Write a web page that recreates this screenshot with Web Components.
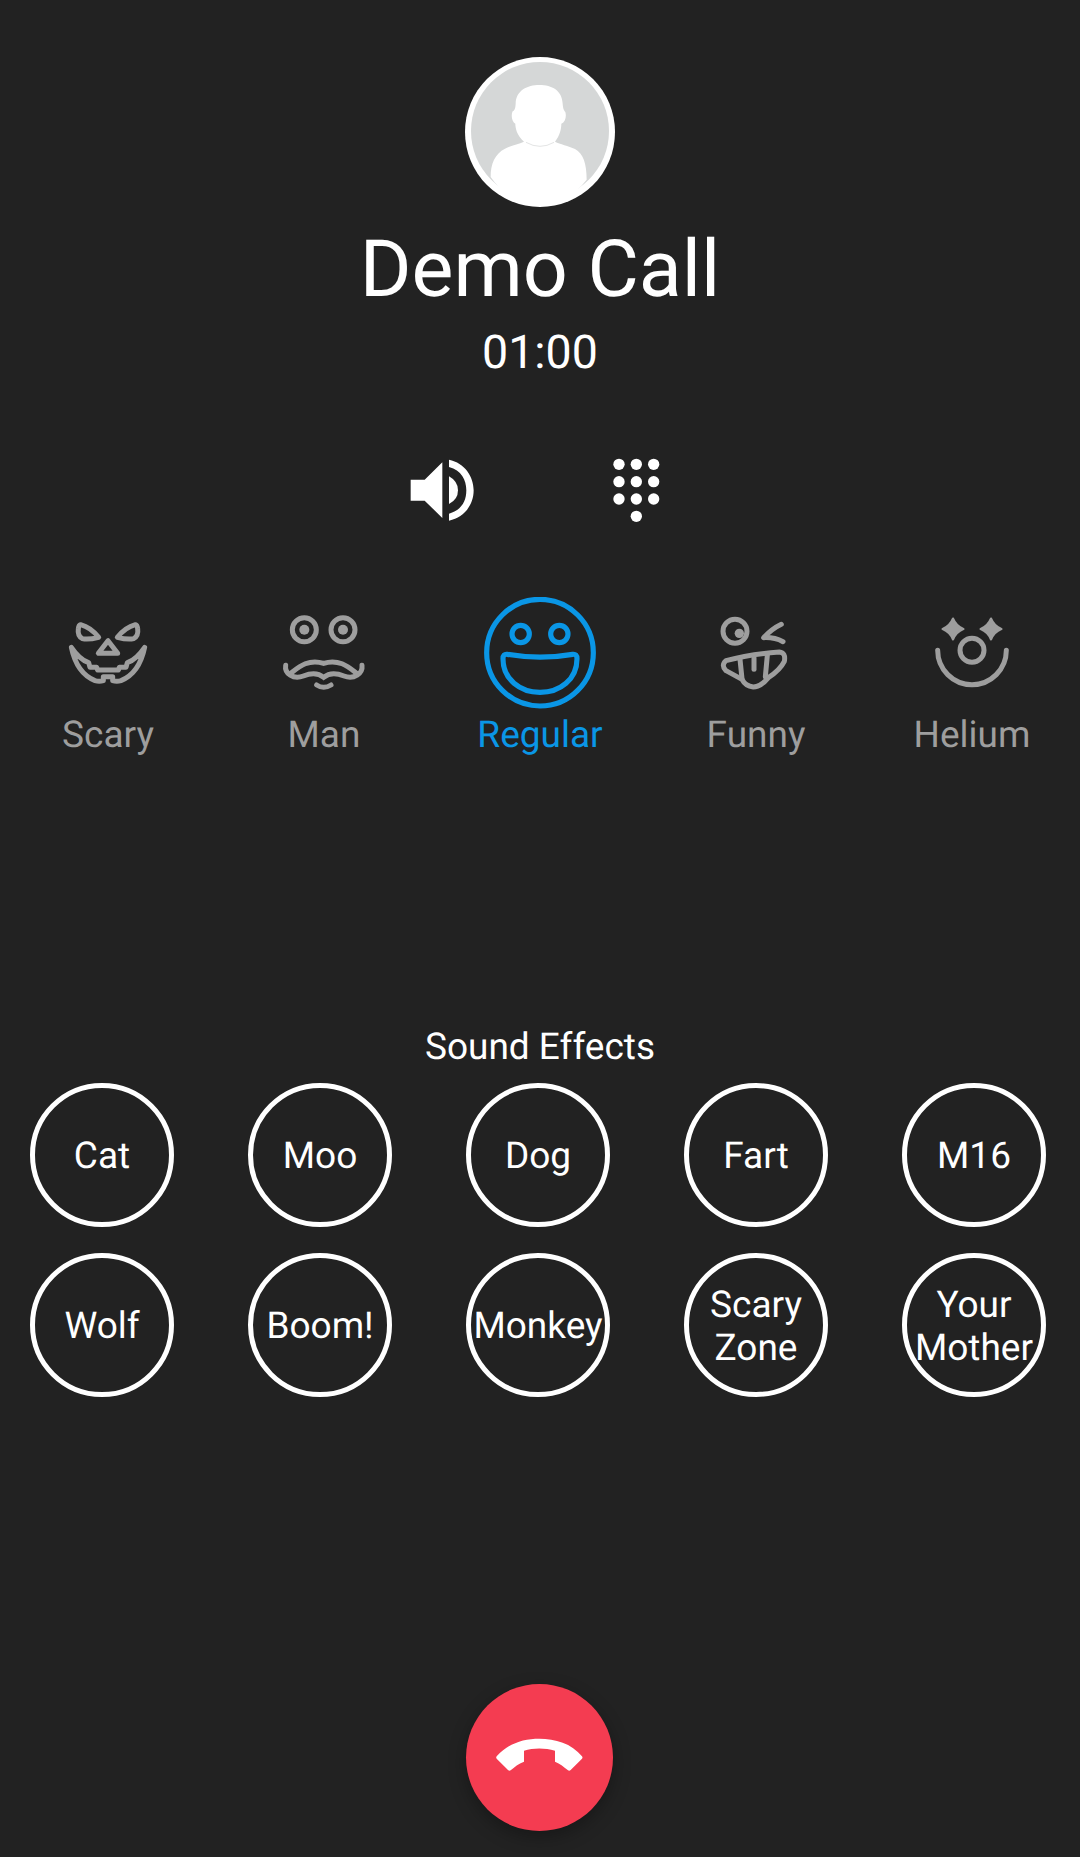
<!DOCTYPE html>
<html>
<head>
<meta charset="utf-8">
<title>Demo Call</title>
<style>
    html, body {
        margin: 0;
        background: #222222;
    }
</style>
</head>
<body>
<call-screen>
    <call-header slot="header" name="Demo Call" time="01:00"></call-header>

    <icon-button slot="actions">
        <svg viewBox="58 52 200 200" width="66.67" height="66.67" fill="currentColor">
            <path d="M63 120H105L158 68V235L105 183H63Z"/>
            <path d="M178 110Q205 125 205 152Q205 180 178 193Z"/>
            <path d="M178 60C225 70 252 110 252 152C252 195 225 233 178 243V222C215 212 230 185 230 152C230 120 215 92 178 82Z"/>
        </svg>
    </icon-button>
    <icon-button slot="actions">
        <svg viewBox="639 51 200 200" width="66.67" height="66.67" fill="currentColor">
            <circle cx="687" cy="73" r="17"/><circle cx="739" cy="73" r="17"/><circle cx="791" cy="73" r="17"/>
            <circle cx="687" cy="125" r="17"/><circle cx="739" cy="125" r="17"/><circle cx="791" cy="125" r="17"/>
            <circle cx="687" cy="177" r="17"/><circle cx="739" cy="177" r="17"/><circle cx="791" cy="177" r="17"/>
            <circle cx="739" cy="229" r="17"/>
        </svg>
    </icon-button>

    <voice-mode slot="modes" label="Scary">
        <svg viewBox="36 21 336 336" fill="none" stroke="currentColor" stroke-width="15" stroke-linejoin="round" stroke-linecap="round">
            <path d="M122 104Q152 112 176 142Q145 150 127 146Q112 138 115 116Q116 106 122 104Z"/>
            <path d="M286 104Q256 112 232 142Q263 150 281 146Q296 138 293 116Q292 106 286 104Z"/>
            <path d="M204 152L175 190H233Z"/>
            <path d="M94 172C105 225 130 258 165 272Q178 276 190 272V260H218V272Q230 276 243 272C278 258 303 225 314 172C295 200 280 212 262 218L258 232H238L235 240H173L170 232H150L146 218C128 212 113 200 94 172Z"/>
        </svg>
    </voice-mode>
    <voice-mode slot="modes" label="Man">
        <svg viewBox="684 21 336 336" fill="none" stroke="currentColor" stroke-width="15" stroke-linecap="round">
            <circle cx="793" cy="119" r="36"/>
            <circle cx="909" cy="119" r="36"/>
            <circle cx="793" cy="119" r="15" fill="currentColor" stroke="none"/>
            <circle cx="909" cy="119" r="15" fill="currentColor" stroke="none"/>
            <path d="M737 226C733 250 760 270 790 258C812 249 832 246 851 262C870 246 890 249 912 258C942 270 969 250 966 226"/>
            <path d="M752 250C775 232 805 205 851 220C897 205 927 232 950 250"/>
            <path d="M830 285Q851 299 873 285"/>
        </svg>
    </voice-mode>
    <voice-mode slot="modes" label="Regular" active>
        <svg viewBox="72 21 336 336" fill="none" stroke="currentColor" stroke-width="15.5">
            <circle cx="240" cy="188" r="160"/>
            <circle cx="182" cy="132" r="26"/>
            <circle cx="298" cy="132" r="26"/>
            <path d="M142 193Q240 210 338 193Q351 191 351 206C351 268 300 307 240 307C180 307 129 268 129 206Q129 191 142 193Z"/>
        </svg>
    </voice-mode>
    <voice-mode slot="modes" label="Funny">
        <svg viewBox="30 21 336 336" fill="none" stroke="currentColor" stroke-width="15" stroke-linecap="round" stroke-linejoin="round">
            <circle cx="135" cy="124" r="36"/>
            <circle cx="148" cy="130" r="14" fill="currentColor" stroke="none"/>
            <path d="M274 103C255 112 235 128 221 143C242 142 262 146 279 155"/>
            <path d="M108 212Q180 192 268 186Q288 188 283 214Q270 240 236 262Q212 291 190 291Q166 288 156 268L108 242Q92 226 108 212Z"/>
            <path d="M150 208L156 266"/>
            <path d="M232 196L226 260"/>
            <path d="M192 204V238"/>
        </svg>
    </voice-mode>
    <voice-mode slot="modes" label="Helium">
        <svg viewBox="678 21 336 336" fill="none" stroke="currentColor" stroke-width="15" stroke-linecap="round">
            <path fill="currentColor" stroke-width="7" stroke-linejoin="round" d="M789 86Q798 108 820 117Q798 126 789 148Q780 126 758 117Q780 108 789 86Z"/>
            <path fill="currentColor" stroke-width="7" stroke-linejoin="round" d="M903 86Q912 108 934 117Q912 126 903 148Q894 126 872 117Q894 108 903 86Z"/>
            <circle cx="846" cy="181" r="36"/>
            <path d="M743 181A103 103 0 0 0 949 181"/>
        </svg>
    </voice-mode>

    <effect-button slot="effects">Cat</effect-button>
    <effect-button slot="effects">Moo</effect-button>
    <effect-button slot="effects">Dog</effect-button>
    <effect-button slot="effects">Fart</effect-button>
    <effect-button slot="effects">M16</effect-button>
    <effect-button slot="effects">Wolf</effect-button>
    <effect-button slot="effects">Boom!</effect-button>
    <effect-button slot="effects">Monkey</effect-button>
    <effect-button slot="effects">Scary Zone</effect-button>
    <effect-button slot="effects">Your Mother</effect-button>

    <hangup-button slot="hangup"></hangup-button>
</call-screen>

<script>
const screenTemplate = document.createElement("template");
screenTemplate.innerHTML = `
    <style>
        :host {
            display: flex;
            flex-direction: column;
            box-sizing: border-box;
            height: 1857px;
            padding-top: 57px;
            background: #222222;
            color: #ffffff;
            font-family: Roboto, "Liberation Sans", sans-serif;
            text-rendering: geometricPrecision;
            overflow: hidden;
        }

        #actions {
            display: flex;
            justify-content: center;
            gap: 127px;
            margin-top: 76px;
            padding-right: 1px;
        }

        #modes {
            display: grid;
            grid-template-columns: repeat(5, 216px);
            margin-top: 73px;
        }

        #effectsTitle {
            margin-top: 270px;
            font-size: 37px;
            line-height: 42px;
            text-align: center;
        }

        #effects {
            display: grid;
            grid-template-columns: repeat(5, 144px);
            column-gap: 74px;
            row-gap: 26px;
            padding-left: 30px;
            margin-top: 14px;
        }

        #hangup {
            display: flex;
            justify-content: center;
            margin-top: auto;
            padding-bottom: 26px;
            padding-right: 1px;
        }
    </style>
    <slot name="header"></slot>
    <div id="actions"><slot name="actions"></slot></div>
    <div id="modes"><slot name="modes"></slot></div>
    <div id="effectsTitle">Sound Effects</div>
    <div id="effects"><slot name="effects"></slot></div>
    <div id="hangup"><slot name="hangup"></slot></div>
`;

class CallScreen extends HTMLElement {
    constructor() {
        super();
        this.attachShadow({mode: "open"}).appendChild(screenTemplate.content.cloneNode(true));
    }
}

const headerTemplate = document.createElement("template");
headerTemplate.innerHTML = `
    <style>
        :host {
            display: flex;
            flex-direction: column;
            align-items: center;
        }

        svg {
            display: block;
            width: 150px;
            height: 150px;
        }

        #name {
            margin-top: 17px;
            font-size: 79px;
            line-height: 92px;
        }

        #time {
            margin-top: 10px;
            font-size: 46.5px;
            line-height: 55px;
        }
    </style>
    <svg viewBox="75 50 450 450">
        <circle cx="300" cy="275" r="225" fill="#ffffff"/>
        <circle cx="300" cy="272" r="207" fill="#d5d7d7"/>
        <path fill="#ffffff" d="M152 410C152 370 165 340 195 325C215 315 235 312 252 304C230 285 226 262 226 250C216 245 212 225 218 213C224 210 226 205 227 190C228 150 262 134 298 134C336 134 366 150 368 190C369 205 372 210 376 215C380 228 376 245 364 250C364 265 360 285 345 304C360 312 385 316 405 326C430 340 440 370 440 418C400 470 350 490 300 490C240 490 190 465 152 410Z"/>
        <path fill="none" stroke="#e4e5e5" stroke-width="3" d="M258 306Q300 330 342 306"/>
    </svg>
    <div id="name"></div>
    <div id="time"></div>
`;

class CallHeader extends HTMLElement {
    constructor() {
        super();
        const root = this.attachShadow({mode: "open"});
        root.appendChild(headerTemplate.content.cloneNode(true));
        root.getElementById("name").textContent = this.getAttribute("name");
        root.getElementById("time").textContent = this.getAttribute("time");
    }
}

const iconButtonTemplate = document.createElement("template");
iconButtonTemplate.innerHTML = `
    <style>
        :host {
            display: flex;
            width: 67px;
            height: 67px;
            color: #ffffff;
        }
    </style>
    <slot></slot>
`;

class IconButton extends HTMLElement {
    constructor() {
        super();
        this.attachShadow({mode: "open"}).appendChild(iconButtonTemplate.content.cloneNode(true));
    }
}

const voiceModeTemplate = document.createElement("template");
voiceModeTemplate.innerHTML = `
    <style>
        :host {
            display: flex;
            flex-direction: column;
            align-items: center;
            color: #9e9e9e;
        }

        :host([active]) {
            color: #0a96e6;
        }

        ::slotted(svg) {
            display: block;
            width: 112px;
            height: 112px;
        }

        #label {
            margin-top: 6px;
            font-size: 37px;
            line-height: 42px;
        }
    </style>
    <slot></slot>
    <div id="label"></div>
`;

class VoiceMode extends HTMLElement {
    constructor() {
        super();
        const root = this.attachShadow({mode: "open"});
        root.appendChild(voiceModeTemplate.content.cloneNode(true));
        root.getElementById("label").textContent = this.getAttribute("label");
    }
}

const effectButtonTemplate = document.createElement("template");
effectButtonTemplate.innerHTML = `
    <style>
        :host {
            display: flex;
            align-items: center;
            justify-content: center;
            box-sizing: border-box;
            width: 144px;
            height: 144px;
            padding-top: 3px;
            border: 5px solid #ffffff;
            border-radius: 50%;
            font-size: 37px;
            line-height: 43px;
            text-align: center;
            color: #ffffff;
        }
    </style>
    <slot></slot>
`;

class EffectButton extends HTMLElement {
    constructor() {
        super();
        this.attachShadow({mode: "open"}).appendChild(effectButtonTemplate.content.cloneNode(true));
    }
}

const hangupTemplate = document.createElement("template");
hangupTemplate.innerHTML = `
    <style>
        :host {
            display: flex;
            width: 147px;
            height: 147px;
            border-radius: 50%;
            background: #f43c51;
            box-shadow: 0 6px 18px rgba(0, 0, 0, 0.3);
        }

        svg {
            display: block;
            width: 147px;
            height: 147px;
        }
    </style>
    <svg viewBox="78 72 441 441">
        <path fill="#ffffff" d="M170 289C205 250 250 236 298 236C345 236 395 250 426 289Q429 293 426 296L392 330Q388 334 384 331C372 321 360 311 345 305V272C315 263 280 263 252 272V305C235 311 224 321 212 331Q208 334 204 330L170 296Q167 293 170 289Z"/>
    </svg>
`;

class HangupButton extends HTMLElement {
    constructor() {
        super();
        this.attachShadow({mode: "open"}).appendChild(hangupTemplate.content.cloneNode(true));
    }
}

customElements.define("call-screen", CallScreen);
customElements.define("call-header", CallHeader);
customElements.define("icon-button", IconButton);
customElements.define("voice-mode", VoiceMode);
customElements.define("effect-button", EffectButton);
customElements.define("hangup-button", HangupButton);
</script>
</body>
</html>
